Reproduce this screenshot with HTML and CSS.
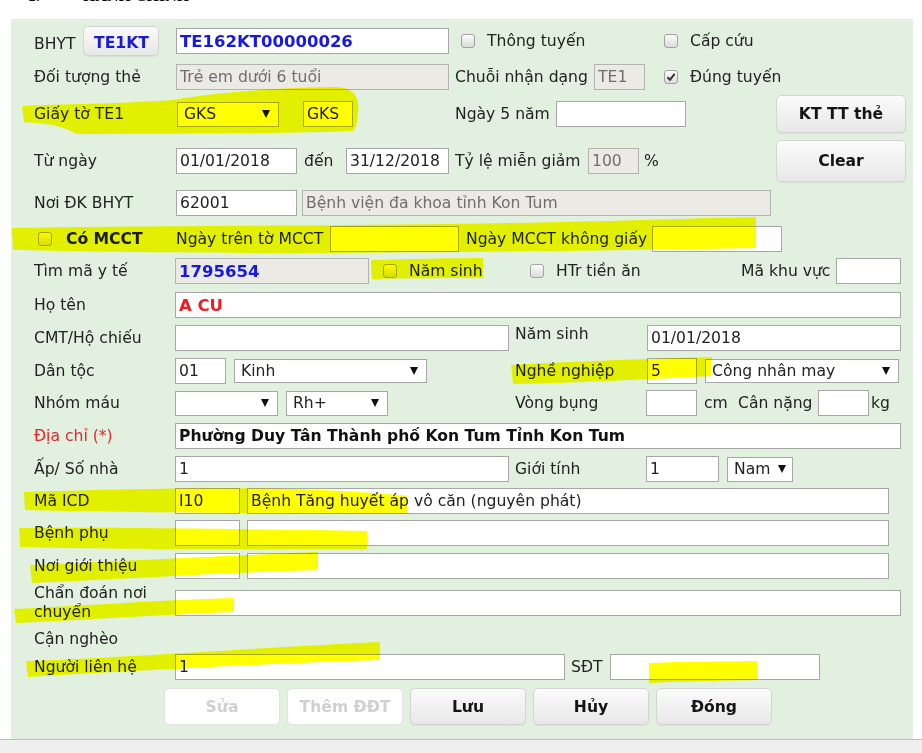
FILE: index.html
```html
<!DOCTYPE html>
<html lang="vi">
<head>
<meta charset="utf-8">
<title>Thông tin hành chính</title>
<link rel="stylesheet" href="styles.css">
</head>
<body>
<div class="page">
  <div class="doc-title"><span class="num">1.</span><span class="ttl">HÀNH CHÍNH</span></div>
  <div class="panel">
    <div class="row">
      <div class="lbl top bhyt"><span class="bhyt-t">BHYT</span><button class="btn card">TE1KT</button></div>
      <input class="inp blue w273" value="TE162KT00000026">
      <label class="cbi ml12 w203"><span class="cb"></span>Thông tuyến</label>
      <label class="cbi"><span class="cb"></span>Cấp cứu</label>
    </div>
    <div class="row mt10">
      <div class="lbl top">Đối tượng thẻ</div>
      <input class="inp dis w273" value="Trẻ em dưới 6 tuổi">
      <div class="txt ml6 w139">Chuỗi nhận dạng</div>
      <input class="inp dis w51" value="TE1">
      <label class="cbi ml19"><span class="cb"><svg width="10" height="10" viewBox="0 0 10 10"><path d="M1.5 5.2 L4 7.8 L8.6 1.8" fill="none" stroke="#333" stroke-width="2"/></svg></span>Đúng tuyến</label>
    </div>
    <div class="row mt11">
      <div class="lbl top">Giấy tờ TE1</div>
      <div class="sel ml1 w102 h25">GKS</div>
      <input class="inp ml24 w50" value="GKS">
      <div class="txt ml102 w101">Ngày 5 năm</div>
      <input class="inp w130" value="">
      <button class="btn side h38">KT TT thẻ</button>
    </div>
    <div class="row mt21">
      <div class="lbl top">Từ ngày</div>
      <input class="inp w121" value="01/01/2018">
      <div class="txt ml7 w42">đến</div>
      <input class="inp w103" value="31/12/2018">
      <div class="txt ml6 w133">Tỷ lệ miễn giảm</div>
      <input class="inp dis w51" value="100">
      <div class="txt ml5">%</div>
      <button class="btn side h42">Clear</button>
    </div>
    <div class="row mt16">
      <div class="lbl top">Nơi ĐK BHYT</div>
      <input class="inp w121" value="62001">
      <input class="inp dis ml5 w469" value="Bệnh viện đa khoa tỉnh Kon Tum">
    </div>
    <div class="row mt10">
      <div class="lbl top mcct"><span class="cb"></span><b>Có MCCT</b></div>
      <div class="txt w154">Ngày trên tờ MCCT</div>
      <input class="inp w129" value="">
      <div class="txt ml7 w186">Ngày MCCT không giấy</div>
      <input class="inp w130" value="">
    </div>
    <div class="row mt6">
      <div class="lbl">Tìm mã y tế</div>
      <input class="inp dis blue w194" value="1795654">
      <label class="cbi ml14 w147"><span class="cb"></span>Năm sinh</label>
      <label class="cbi w211"><span class="cb"></span>HTr tiền ăn</label>
      <div class="txt w95">Mã khu vực</div>
      <input class="inp w65" value="">
    </div>
    <div class="row mt8">
      <div class="lbl">Họ tên</div>
      <input class="inp red w726" value="A CU">
    </div>
    <div class="row mt7">
      <div class="lbl">CMT/Hộ chiếu</div>
      <input class="inp w334" value="">
      <div class="txt raise ml6 w132">Năm sinh</div>
      <input class="inp w254" value="01/01/2018">
    </div>
    <div class="row mt7">
      <div class="lbl">Dân tộc</div>
      <input class="inp w51" value="01">
      <div class="sel ml8 w193">Kinh</div>
      <div class="txt ml88 w132">Nghề nghiệp</div>
      <input class="inp w50" value="5">
      <div class="sel ml8 w194">Công nhân may</div>
    </div>
    <div class="row mt6">
      <div class="lbl">Nhóm máu</div>
      <div class="sel w103 h25"></div>
      <div class="sel ml8 w102 h25">Rh+</div>
      <div class="txt ml127 w131">Vòng bụng</div>
      <input class="inp w51" value="">
      <div class="txt ml7 w34">cm</div>
      <div class="txt w80">Cân nặng</div>
      <input class="inp w51" value="">
      <div class="txt ml2">kg</div>
    </div>
    <div class="row mt7">
      <div class="lbl req">Địa chỉ (*)</div>
      <input class="inp bold w726" value="Phường Duy Tân Thành phố Kon Tum Tỉnh Kon Tum">
    </div>
    <div class="row mt7">
      <div class="lbl">Ấp/ Số nhà</div>
      <input class="inp w334" value="1">
      <div class="txt ml6 w131">Giới tính</div>
      <input class="inp w73" value="1">
      <div class="sel ml8 w66 h25">Nam</div>
    </div>
    <div class="row mt6">
      <div class="lbl">Mã ICD</div>
      <input class="inp w65" value="I10">
      <input class="inp ml7 w642" value="Bệnh Tăng huyết áp vô căn (nguyên phát)">
    </div>
    <div class="row mt6">
      <div class="lbl">Bệnh phụ</div>
      <input class="inp w65" value="">
      <input class="inp ml7 w642" value="">
    </div>
    <div class="row mt7">
      <div class="lbl">Nơi giới thiệu</div>
      <input class="inp w65" value="">
      <input class="inp ml7 w642" value="">
    </div>
    <div class="row mt11">
      <div class="lbl two">Chẩn đoán nơi<br>chuyển</div>
      <input class="inp w726" value="">
    </div>
    <div class="row mt10">
      <div class="lbl">Cận nghèo</div>
    </div>
    <div class="row mt2">
      <div class="lbl">Người liên hệ</div>
      <input class="inp w390" value="1">
      <div class="txt ml6 w39">SĐT</div>
      <input class="inp w210" value="">
    </div>
    <div class="row actions mt8">
      <button class="btn act dis">Sửa</button>
      <button class="btn act dis">Thêm ĐĐT</button>
      <button class="btn act">Lưu</button>
      <button class="btn act">Hủy</button>
      <button class="btn act">Đóng</button>
    </div>
  </div>
  <div class="statusbar"></div>
  <svg class="marker" width="922" height="753" viewBox="0 0 922 753" aria-hidden="true">
    <path d="M22,106 C60,104 120,104 172,100 C215,93 280,87 338,87 C354,88 360,98 358,112 C357,121 357,127 353,131 C300,133 200,134 76,134 C70,130 60,124 24,122 Z"/>
    <path d="M12,228 C100,226 300,226 450,224 C600,222 700,218 756,217 L756,248 C650,250 500,252 300,253 C150,253 60,251 13,250 Z"/>
    <path d="M371,260 C410,259 450,258 483,258 L483,278 C450,278 410,278 372,279 Z"/>
    <path d="M511,365 C560,362 640,359 712,357 L711,376 C650,379 580,383 513,384 Z"/>
    <path d="M24,492 C100,490 200,487 300,489 C350,491 390,494 407,496 L407,514 C300,514 100,512 25,510 Z"/>
    <path d="M19,528 C100,527 250,529 367,531 L367,549 C250,550 100,549 20,547 Z"/>
    <path d="M30,565 C120,561 220,556 318,552 L318,570 C220,573 120,579 32,583 Z"/>
    <path d="M14,609 C80,606 160,600 234,598 L234,612 C160,615 80,620 16,623 Z"/>
    <path d="M26,661 C120,658 250,648 380,642 L380,660 C250,664 120,672 28,677 Z"/>
    <path d="M649,663 C690,661 720,662 757,661 L757,680 C720,681 690,681 649,683 Z"/>
  </svg>
</div>
</body>
</html>
```

FILE: styles.css
```css
* { box-sizing: border-box; }

body {
  margin: 0;
  background: #fff;
  font-family: "DejaVu Sans", Verdana, sans-serif;
  font-size: 15.6px;
  color: #222;
}

.page {
  position: relative;
  width: 922px;
  height: 753px;
  overflow: hidden;
}

.doc-title {
  height: 19px;
  overflow: hidden;
  display: flex;
  font-family: "Liberation Serif", serif;
  font-weight: bold;
  font-size: 16px;
  color: #000;
}
.doc-title span { display: block; line-height: 16px; margin-top: -12px; }
.doc-title .num { margin-left: 28px; }
.doc-title .ttl { margin-left: 43px; }

.panel {
  margin-left: 11px;
  width: 902px;
  height: 720px;
  background: #e2f0df;
  padding: 9px 7px 0 23px;
}

.row {
  display: flex;
  align-items: center;
  height: 26px;
}

.mt2 { margin-top: 2px; }
.mt6 { margin-top: 6px; }
.mt7 { margin-top: 7px; }
.mt8 { margin-top: 8px; }
.mt10 { margin-top: 10px; }
.mt11 { margin-top: 11px; }
.mt16 { margin-top: 16px; }
.mt21 { margin-top: 21px; }

.lbl { flex: none; width: 141px; white-space: nowrap; }
.lbl.top { width: 142px; }
.lbl.req { color: #e6262c; }
.lbl.two { line-height: 19px; }
.bhyt { display: flex; align-items: center; gap: 8px; }
.bhyt-t { padding-top: 5px; }
.mcct { display: flex; align-items: center; }
.mcct .cb { margin-left: 4px; margin-right: 14px; }
.mcct b { color: #1a1a1a; }

.txt { flex: none; white-space: nowrap; }
.txt.raise { align-self: flex-start; line-height: 18px; }

.inp {
  flex: none;
  height: 26px;
  border: 1px solid #a7a7a7;
  background: #fff;
  font: inherit;
  color: #222;
  padding: 0 3px;
  margin: 0;
  outline: none;
}
.inp.dis { background: #ebeae5; color: #6f6f6f; border-color: #b3b3b3; }
.inp.blue { color: #1717e6; font-weight: bold; font-size: 16.5px; }
.inp.red { color: #ee1c24; font-weight: bold; font-size: 16.5px; }
.inp.bold { font-weight: bold; color: #111; }

.sel {
  flex: none;
  height: 24px;
  border: 1px solid #a7a7a7;
  background: #fff;
  display: flex;
  align-items: center;
  justify-content: space-between;
  padding: 0 8px 0 6px;
  white-space: nowrap;
}
.sel::after {
  content: "";
  margin-left: auto;
  border-left: 4px solid transparent;
  border-right: 4px solid transparent;
  border-top: 8px solid #111;
}
.sel.w66::after { margin-left: 8px; }
.h25 { height: 25px; }

.btn {
  flex: none;
  font: inherit;
  font-weight: bold;
  color: #141414;
  border: 1px solid #d4d4d4;
  border-radius: 5px;
  background: linear-gradient(#fbfbfb, #e7e7e7);
  box-shadow: 0 1px 1px rgba(0, 0, 0, 0.06);
  padding: 0;
  margin: 0;
}
.btn.card { width: 76px; height: 30px; color: #1a1ad6; padding-top: 4px; }
.btn.side { width: 130px; margin-left: auto; }
.h38 { height: 38px; }
.h42 { height: 42px; }
.btn.act { width: 116px; height: 37px; }
.btn.dis { background: #fff; color: #d0d0d0; border-color: #e1e1e1; box-shadow: none; }

.actions { height: 37px; gap: 7px; padding-left: 130px; }

.cb {
  flex: none;
  width: 14px;
  height: 14px;
  border: 1px solid #a2a2a2;
  border-radius: 3px;
  background: linear-gradient(#fbfbfb, #dcdcdc);
  display: inline-flex;
  align-items: center;
  justify-content: center;
}
.cbi { flex: none; display: flex; align-items: center; gap: 12px; white-space: nowrap; }

.ml1 { margin-left: 1px; }
.ml2 { margin-left: 2px; }
.ml5 { margin-left: 5px; }
.ml6 { margin-left: 6px; }
.ml7 { margin-left: 7px; }
.ml8 { margin-left: 8px; }
.ml12 { margin-left: 12px; }
.ml14 { margin-left: 14px; }
.ml19 { margin-left: 19px; }
.ml24 { margin-left: 24px; }
.ml88 { margin-left: 88px; }
.ml102 { margin-left: 102px; }
.ml127 { margin-left: 127px; }

.w34 { width: 34px; }
.w39 { width: 39px; }
.w42 { width: 42px; }
.w50 { width: 50px; }
.w51 { width: 51px; }
.w65 { width: 65px; }
.w66 { width: 66px; }
.w73 { width: 73px; }
.w80 { width: 80px; }
.w95 { width: 95px; }
.w101 { width: 101px; }
.w102 { width: 102px; }
.w103 { width: 103px; }
.w121 { width: 121px; }
.w129 { width: 129px; }
.w130 { width: 130px; }
.w131 { width: 131px; }
.w132 { width: 132px; }
.w133 { width: 133px; }
.w139 { width: 139px; }
.w147 { width: 147px; }
.w154 { width: 154px; }
.w186 { width: 186px; }
.w193 { width: 193px; }
.w194 { width: 194px; }
.w203 { width: 203px; }
.w210 { width: 210px; }
.w211 { width: 211px; }
.w254 { width: 254px; }
.w273 { width: 273px; }
.w334 { width: 334px; }
.w390 { width: 390px; }
.w469 { width: 469px; }
.w642 { width: 642px; }
.w726 { width: 726px; }

.statusbar {
  height: 14px;
  background: #efefef;
  border-top: 1px solid #bdbdbd;
}

.marker {
  position: absolute;
  left: 0;
  top: 0;
  fill: #ffff00;
  mix-blend-mode: multiply;
  pointer-events: none;
}
```
